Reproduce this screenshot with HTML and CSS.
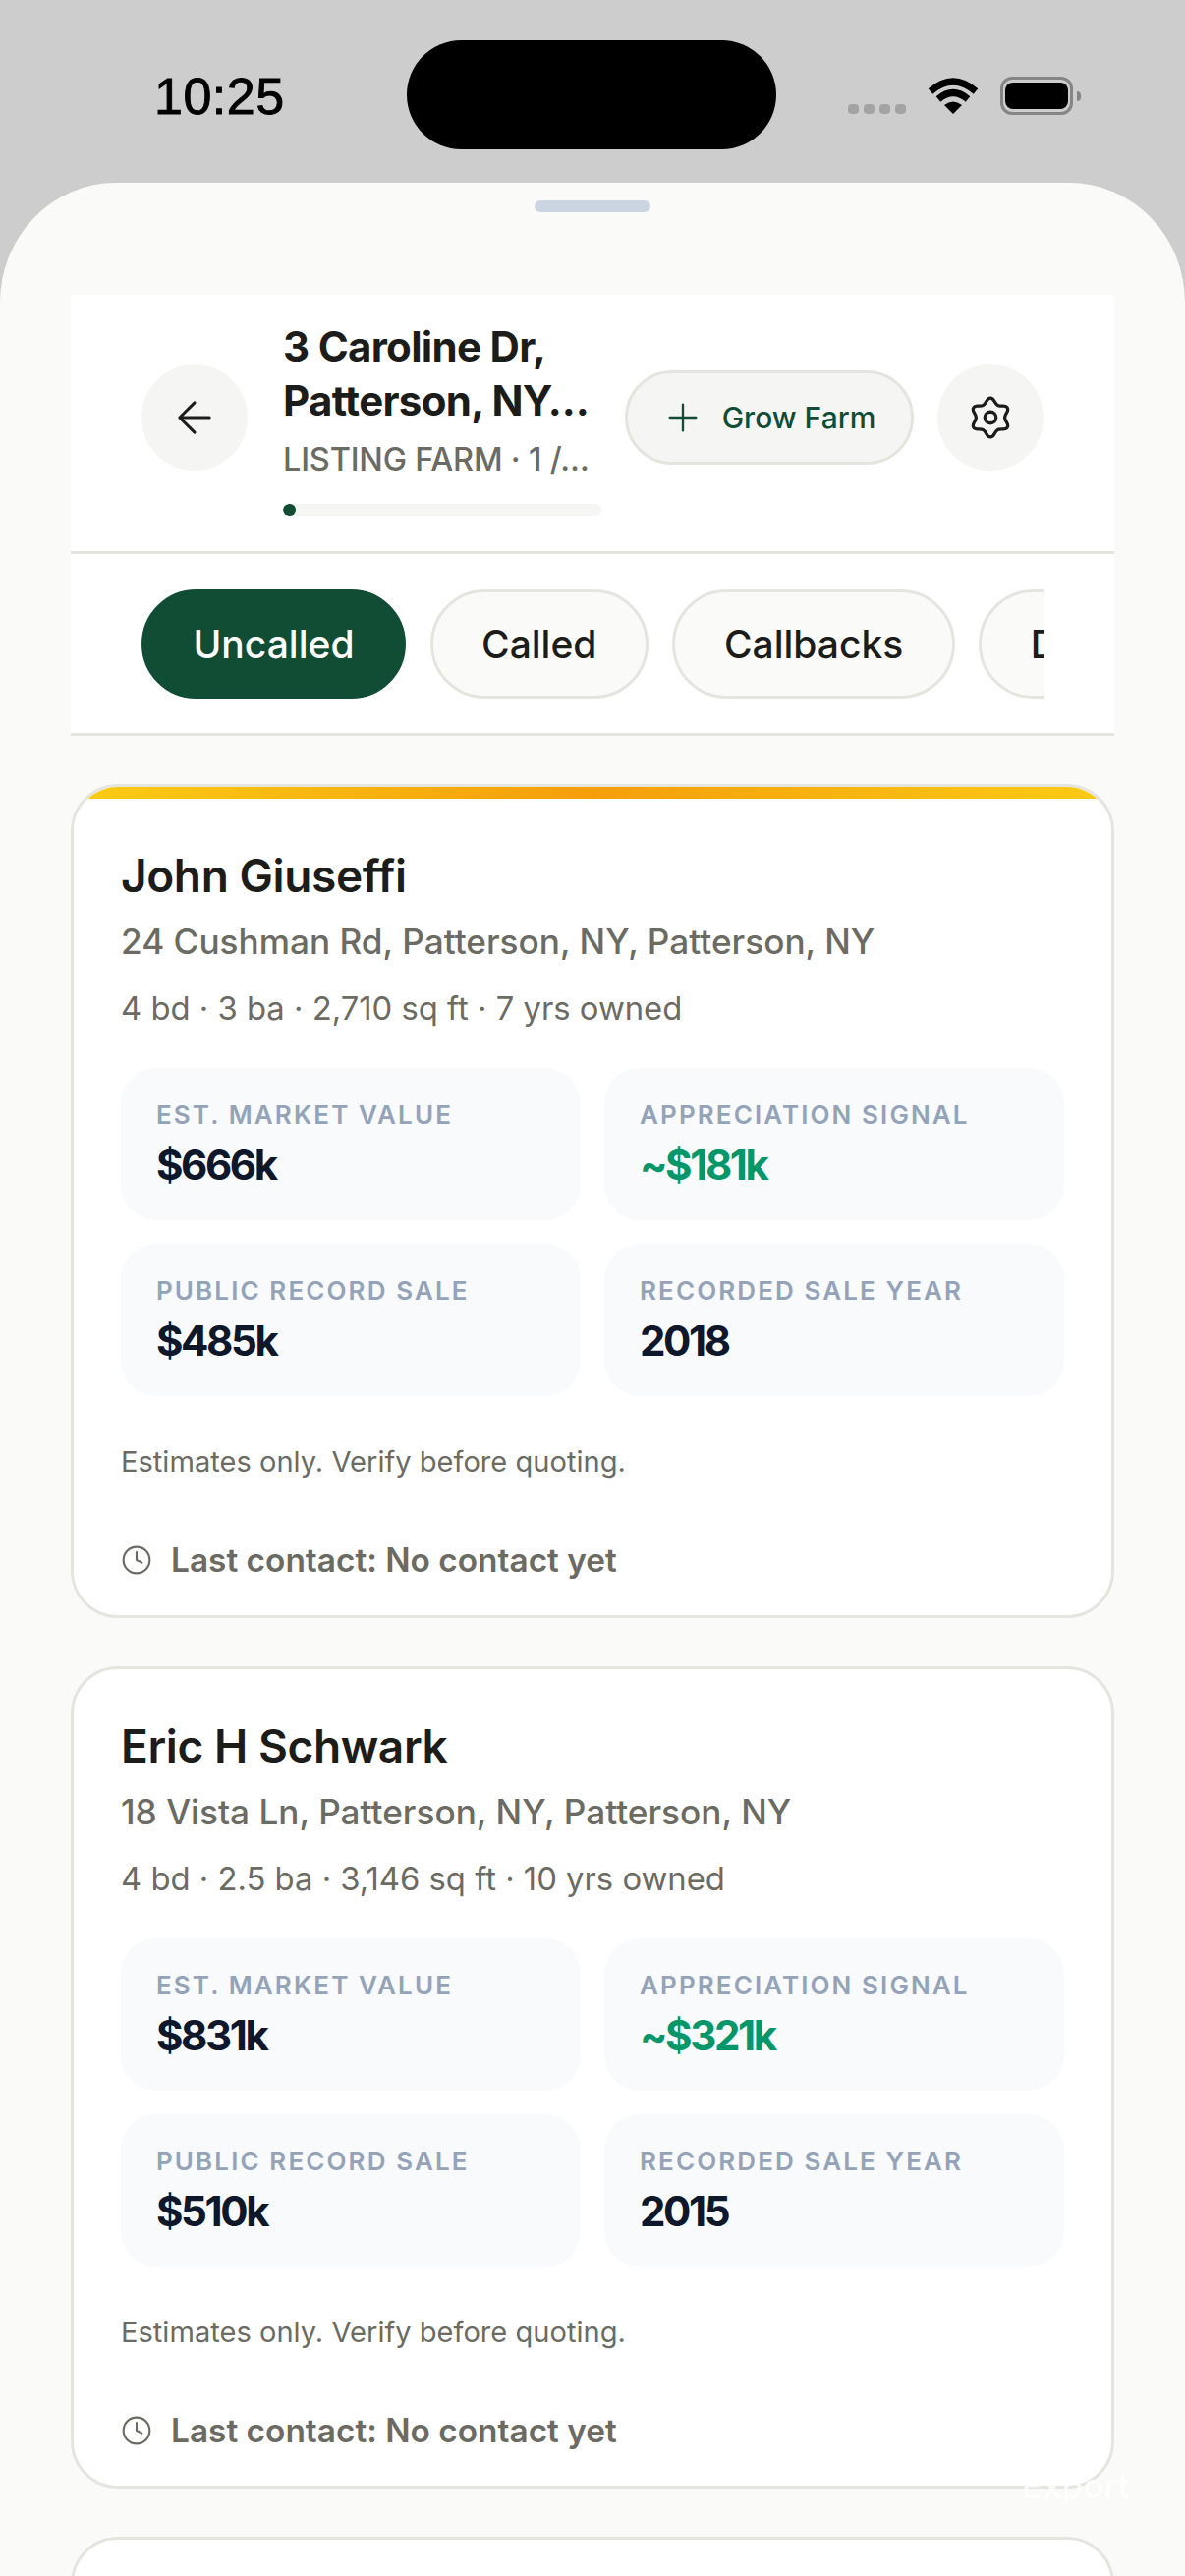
FILE: index.html
```html
<!DOCTYPE html>
<html lang="en">
<head>
<meta charset="utf-8">
<title>Listing Farm</title>
<link rel="stylesheet" href="styles.css">
</head>
<body>
<div class="phone">
  <div class="status">
    <span class="time">10:25</span>
    <div class="status-icons">
      <span class="dots"><i></i><i></i><i></i><i></i></span>
      <svg class="wifi" viewBox="0 0 52 37"><path class="wifi-arc" d="M3 14Q26-6 49 14"/><path class="wifi-arc" d="M11 22Q26 9 41 22"/><path d="M26 37L17 28Q26 21 35 28Z"/></svg>
      <span class="battery"><span class="battery-fill"></span></span>
      <span class="battery-cap"></span>
    </div>
  </div>
  <div class="island"></div>
  <main class="sheet">
    <div class="handle"></div>
    <header class="head">
      <button class="circle">
        <svg class="ico-back" viewBox="0 0 24 24"><path d="M12 19l-7-7 7-7M19 12H5"/></svg>
      </button>
      <div class="head-text">
        <h1 class="title">3 Caroline Dr, Patterson, NY…</h1>
        <p class="sub">LISTING FARM · 1 /…</p>
        <div class="progress"><div class="progress-fill"></div></div>
      </div>
      <button class="grow">
        <svg class="ico-plus" viewBox="0 0 24 24"><path d="M12 4v16M4 12h16"/></svg>
        <span>Grow Farm</span>
      </button>
      <button class="circle">
        <svg class="ico-gear" viewBox="0 0 24 24"><path d="M12 1.6C14.2 1.6 13.9 4.32 15.8 5.42C17.7 6.52 19.9 4.9 21 6.8C22.1 8.7 19.6 9.8 19.6 12C19.6 14.2 22.1 15.3 21 17.2C19.9 19.1 17.7 17.48 15.8 18.58C13.9 19.68 14.2 22.4 12 22.4C9.8 22.4 10.1 19.68 8.2 18.58C6.3 17.48 4.1 19.1 3 17.2C1.9 15.3 4.4 14.2 4.4 12C4.4 9.8 1.9 8.7 3 6.8C4.1 4.9 6.3 6.52 8.2 5.42C10.1 4.32 9.8 1.6 12 1.6Z"/><circle cx="12" cy="12" r="3"/></svg>
      </button>
    </header>
    <nav class="tabs">
      <div class="tabs-scroll">
        <span class="pill pill-on">Uncalled</span>
        <span class="pill">Called</span>
        <span class="pill">Callbacks</span>
        <span class="pill">Done</span>
      </div>
    </nav>
    <section class="list">
      <article class="card">
        <div class="card-bar"></div>
        <div class="card-body">
          <h2 class="name">John Giuseffi</h2>
          <p class="addr">24 Cushman Rd, Patterson, NY, Patterson, NY</p>
          <p class="meta">4 bd · 3 ba · 2,710 sq ft · 7 yrs owned</p>
          <div class="stats">
            <div class="stat"><div class="label">Est. Market Value</div><div class="value">$666k</div></div>
            <div class="stat"><div class="label">Appreciation Signal</div><div class="value value-green">~$181k</div></div>
            <div class="stat"><div class="label">Public Record Sale</div><div class="value">$485k</div></div>
            <div class="stat"><div class="label">Recorded Sale Year</div><div class="value">2018</div></div>
          </div>
          <p class="note">Estimates only. Verify before quoting.</p>
          <div class="contact">
            <svg class="ico-clock" viewBox="0 0 24 24"><circle cx="12" cy="12" r="10"/><path d="M12 6v6l4 2"/></svg>
            <span>Last contact: No contact yet</span>
          </div>
        </div>
      </article>
      <article class="card">
        <div class="card-body">
          <h2 class="name">Eric H Schwark</h2>
          <p class="addr">18 Vista Ln, Patterson, NY, Patterson, NY</p>
          <p class="meta">4 bd · 2.5 ba · 3,146 sq ft · 10 yrs owned</p>
          <div class="stats">
            <div class="stat"><div class="label">Est. Market Value</div><div class="value">$831k</div></div>
            <div class="stat"><div class="label">Appreciation Signal</div><div class="value value-green">~$321k</div></div>
            <div class="stat"><div class="label">Public Record Sale</div><div class="value">$510k</div></div>
            <div class="stat"><div class="label">Recorded Sale Year</div><div class="value">2015</div></div>
          </div>
          <p class="note">Estimates only. Verify before quoting.</p>
          <div class="contact">
            <svg class="ico-clock" viewBox="0 0 24 24"><circle cx="12" cy="12" r="10"/><path d="M12 6v6l4 2"/></svg>
            <span>Last contact: No contact yet</span>
          </div>
        </div>
      </article>
      <article class="card card-empty"></article>
    </section>
  </main>
  <span class="export">Export</span>
</div>
</body>
</html>
```
FILE: styles.css
```css
* { box-sizing: border-box; }
html, body { margin: 0; padding: 0; }
body { width: 1206px; height: 2622px; overflow: hidden; background: #cdcdcd; font-family: "Inter", "Liberation Sans", sans-serif; }
.phone { position: relative; width: 1206px; height: 2622px; overflow: hidden; display: flex; flex-direction: column; }

.status { height: 186px; flex: none; display: flex; justify-content: space-between; padding: 70px 106px 0 157px; }
.time { font-family: "Liberation Sans", sans-serif; font-size: 52px; line-height: 56px; color: #000; letter-spacing: 0.5px; -webkit-text-stroke: 0.9px #000; }
.status-icons { display: flex; align-items: flex-start; height: 40px; margin-top: 8px; }
.dots { display: flex; gap: 5px; margin-top: 28px; margin-right: 22px; }
.dots i { width: 11px; height: 10px; border-radius: 4px; background: #a3a3a3; display: block; }
.wifi { width: 52px; height: 37px; margin: 1px 22px 0 0; fill: #000; }
.wifi-arc { fill: none; stroke: #000; stroke-width: 7; }
.battery { width: 74px; height: 39px; border: 3px solid #858585; border-radius: 12px; padding: 3px 2px; display: block; }
.battery-fill { display: block; width: 100%; height: 100%; background: #000; border-radius: 8px; }
.battery-cap { width: 4px; height: 10px; margin: 15px 0 0 4px; background: #858585; border-radius: 0 4px 4px 0; display: block; }
.island { position: absolute; left: 414px; top: 41px; width: 376px; height: 111px; border-radius: 56px; background: #000; }

.sheet { flex: 1; min-height: 0; background: #fafaf8; border-radius: 118px 118px 0 0 / 122px 122px 0 0; padding: 18px 72px 0; display: flex; flex-direction: column; overflow: hidden; }
.handle { width: 118px; height: 12px; border-radius: 6px; background: #cbd5e1; align-self: center; flex: none; margin-bottom: 84px; }

.head { flex: none; display: flex; align-items: center; gap: 24px; background: #fff; padding: 24px 72px 36px; border-bottom: 3px solid #e5e5e0; height: 264px; }
.circle { flex: none; width: 108px; height: 108px; border-radius: 50%; border: 0; padding: 0; background: #f5f5f3; display: flex; align-items: center; justify-content: center; }
.ico-back { width: 52px; height: 52px; fill: none; stroke: #1c1c1a; stroke-width: 1.4; stroke-linecap: round; stroke-linejoin: round; }
.ico-gear { width: 46px; height: 46px; fill: none; stroke: #1c1c1a; stroke-width: 1.7; stroke-linecap: round; stroke-linejoin: round; }
.head-text { flex: none; width: 324px; margin-left: 12px; }
.title { margin: 0; font-size: 42px; line-height: 55px; font-weight: 650; color: #1c1c1a; letter-spacing: -0.7px; }
.sub { margin: 11px 0 0; font-size: 32.5px; line-height: 44px; font-weight: 500; color: #6b6b63; white-space: nowrap; letter-spacing: -0.2px; }
.progress { margin-top: 23px; height: 12px; border-radius: 6px; background: #f5f5f3; overflow: hidden; }
.progress-fill { width: 4%; height: 100%; border-radius: 6px; background: #114d35; }
.grow { flex: none; width: 294px; height: 96px; border: 3px solid #e5e5e0; border-radius: 48px; background: #f5f5f3; display: flex; align-items: center; justify-content: center; gap: 20px; font: 500 30px "Inter", sans-serif; color: #114d35; padding: 0; }
.ico-plus { width: 40px; height: 40px; fill: none; stroke: #114d35; stroke-width: 1.4; stroke-linecap: round; }

.tabs { flex: none; background: #fff; padding: 36px 72px; border-bottom: 3px solid #e5e5e0; height: 185px; }
.tabs-scroll { display: flex; gap: 24.5px; overflow: hidden; }
.pill { flex: none; height: 111px; border: 3px solid #e5e5e0; border-radius: 56px; background: #fafaf8; padding: 0 49.5px; display: flex; align-items: center; font-size: 39px; font-weight: 550; color: #1c1c1a; }
.pill-on { background: #114d35; border-color: #114d35; color: #fff; }

.list { display: flex; flex-direction: column; gap: 49px; margin-top: 49px; }
.card { flex: none; background: #fff; border: 3px solid #e5e5e0; border-radius: 48px; overflow: hidden; }
.card-bar { height: 12px; background: linear-gradient(90deg, #facc15, #f59e0b, #facc15); }
.card-body { padding: 48px 48px 36px; }
.name { margin: 0; font-size: 46px; line-height: 60px; font-weight: 600; color: #1c1c1a; letter-spacing: -0.4px; }
.addr { margin: 12px 0 0; font-size: 35.2px; line-height: 50px; font-weight: 500; color: #6b6b63; }
.meta { margin: 18px 0 0; font-size: 32.8px; line-height: 50px; color: #6b6b63; }
.stats { display: grid; grid-template-columns: 468px 468px; gap: 24px; margin-top: 36px; }
.stat { height: 155px; border-radius: 36px; background: #f8fafc; padding: 32px 36px 0; }
.label { font-size: 26px; line-height: 32px; font-weight: 600; letter-spacing: 2.1px; text-transform: uppercase; color: #94a3b8; white-space: nowrap; }
.value { margin-top: 10px; font-size: 42px; line-height: 50px; font-weight: 700; letter-spacing: -2.4px; color: #0f172a; }
.value-green { color: #059669; }
.note { margin: 47px 0 0; font-size: 29.1px; line-height: 40px; color: #6b6b63; }
.contact { display: flex; align-items: center; gap: 19px; margin-top: 60px; font-size: 33.4px; line-height: 40px; font-weight: 600; color: #6b6b63; }
.ico-clock { width: 32px; height: 32px; fill: none; stroke: #6b6b63; stroke-width: 1.6; stroke-linecap: round; stroke-linejoin: round; flex: none; }
.card-empty { height: 400px; }

.export { position: absolute; left: 1040px; top: 2510px; font-size: 35px; line-height: 40px; font-weight: 500; color: rgba(255,255,255,0.85); }
```
